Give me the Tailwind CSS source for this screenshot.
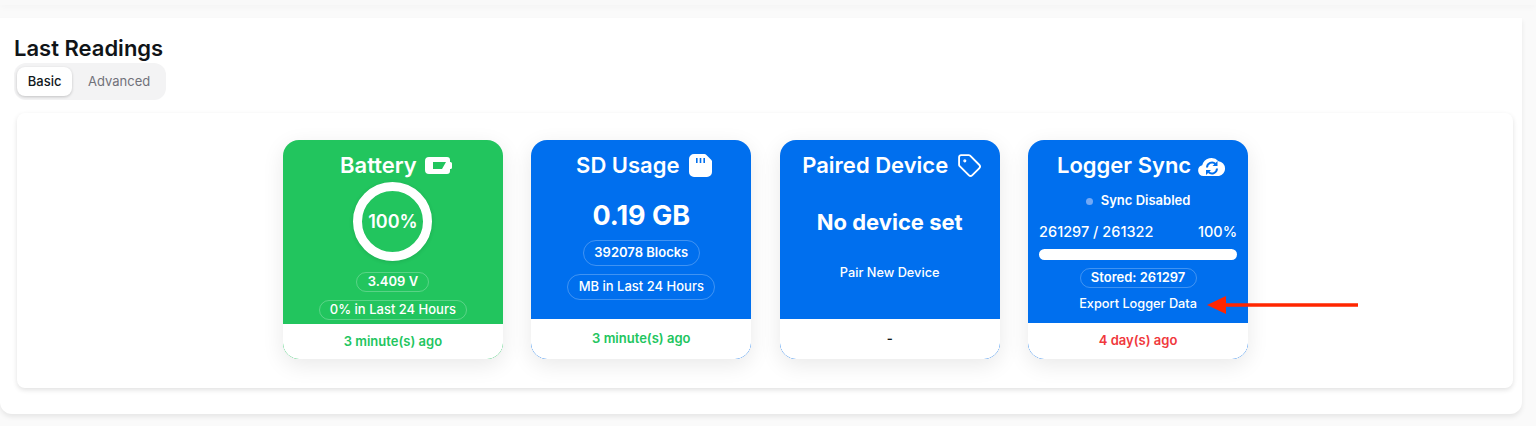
<!DOCTYPE html>
<html><head><meta charset="utf-8"><script src="https://cdn.jsdelivr.net/npm/@tailwindcss/browser@4"></script></head>
<body class="bg-[#fafafa] h-[426px] overflow-hidden relative font-['Inter',sans-serif]">
<div class="h-[5px] bg-[#f9f9f9] shadow-[0_2px_6px_rgba(0,0,0,0.03)]"></div>
<div class="mt-[13px] mr-[14px] h-[396px] bg-white rounded-br-xl rounded-bl-xl shadow-[0_3px_5px_rgba(0,0,0,0.08)] pl-[14px] pt-[16px]">
  <h2 class="text-[22px] leading-[29px] font-semibold text-[#101418]">Last Readings</h2>
  <div class="flex items-center w-[152px] h-[37px] bg-[#f3f3f4] rounded-xl px-[3px] gap-[3px] text-[13px]">
    <button class="w-[56px] h-[29px] bg-white rounded-lg text-[#11181c] font-medium shadow-[0_1px_3px_rgba(0,0,0,0.2)]">Basic</button>
    <button class="w-[89px] h-[29px] text-[#71717a]">Advanced</button>
  </div>
  <div class="mt-[13px] ml-[3px] mr-[9px] h-[275px] bg-white rounded-lg shadow-[0_2px_5px_rgba(0,0,0,0.12)] pt-[27px] flex justify-center gap-[28.4px] pl-[1px]">

    <div class="w-[220px] h-[219px] rounded-2xl overflow-hidden bg-[#22c55e] flex flex-col shadow-[0_6px_22px_rgba(0,0,0,0.09)]">
      <div class="h-[184px] text-white flex flex-col items-center">
        <div class="h-[42px] flex items-center gap-[8px] pt-[8px] ml-[6px]">
          <span class="text-[22px] font-semibold">Battery</span>
          <svg class="w-[27px] h-[17px]" viewBox="0 0 27 17"><path fill="#fff" fill-rule="evenodd" d="M4 0h18a3 3 0 0 1 3 3v2h.5a1.5 1.5 0 0 1 1.5 1.5v4a1.5 1.5 0 0 1-1.5 1.5H25v2a3 3 0 0 1-3 3H4a4 4 0 0 1-4-4V4a4 4 0 0 1 4-4zM8 5v7h9l4-7z"/></svg>
        </div>
        <div class="w-[79px] h-[79px] rounded-full border-[9px] border-white flex items-center justify-center text-[18px] font-semibold shadow-[0_1px_4px_rgba(0,0,0,0.12)]">100%</div>
        <div class="mt-[11px] w-[73px] h-[20px] rounded-full border border-white/25 flex items-center justify-center text-[13px] font-semibold">3.409 V</div>
        <div class="mt-[8px] w-[148px] h-[20px] rounded-full border border-white/25 flex items-center justify-center text-[13px] font-medium">0% in Last 24 Hours</div>
      </div>
      <div class="flex-1 bg-white rounded-b-2xl flex items-center justify-center text-[13px] font-semibold text-[#22c55e]">3 minute(s) ago</div>
    </div>

    <div class="w-[220px] h-[219px] rounded-2xl overflow-hidden bg-[#006fee] flex flex-col shadow-[0_6px_22px_rgba(0,0,0,0.09)]">
      <div class="h-[179px] text-white flex flex-col items-center">
        <div class="h-[42px] flex items-center gap-[9px] pt-[8px] ml-[5px]">
          <span class="text-[22px] font-semibold">SD Usage</span>
          <svg class="w-[23px] h-[23px]" viewBox="0 0 23 23"><path fill="#fff" fill-rule="evenodd" d="M5 0h10.5a2 2 0 0 1 1.4.6l5.5 5.5a2 2 0 0 1 .6 1.4V18a5 5 0 0 1-5 5H5a5 5 0 0 1-5-5V5a5 5 0 0 1 5-5zM7 4v5h1.6V4zM10.7 4v5h1.6V4zM14.4 4v5h1.6V4z"/></svg>
        </div>
        <div class="mt-[17px] h-[34px] flex items-center text-[27px] font-bold">0.19 GB</div>
        <div class="mt-[7px] w-[117px] h-[26px] rounded-full border border-white/25 flex items-center justify-center text-[13px] font-semibold">392078 Blocks</div>
        <div class="mt-[8px] w-[148px] h-[26px] rounded-full border border-white/25 flex items-center justify-center text-[13px] font-medium">MB in Last 24 Hours</div>
      </div>
      <div class="flex-1 bg-white rounded-b-2xl flex items-center justify-center text-[13px] font-semibold text-[#22c55e]">3 minute(s) ago</div>
    </div>

    <div class="w-[220px] h-[219px] rounded-2xl overflow-hidden bg-[#006fee] flex flex-col shadow-[0_6px_22px_rgba(0,0,0,0.09)]">
      <div class="h-[179px] text-white flex flex-col items-center">
        <div class="h-[42px] flex items-center gap-[9px] pt-[8px] ml-[5px]">
          <span class="text-[22px] font-semibold">Paired Device</span>
          <svg class="w-[25px] h-[25px]" viewBox="0 0 24 24" fill="none" stroke="#fff" stroke-width="1.8" stroke-linecap="round" stroke-linejoin="round"><path d="M12.586 2.586A2 2 0 0 0 11.172 2H4a2 2 0 0 0-2 2v7.172a2 2 0 0 0 .586 1.414l8.704 8.704a2.426 2.426 0 0 0 3.42 0l6.58-6.58a2.426 2.426 0 0 0 0-3.42z"/><circle cx="7.5" cy="7.5" r=".6" fill="#fff"/></svg>
        </div>
        <div class="mt-[24px] h-[32px] flex items-center text-[22px] font-bold">No device set</div>
        <div class="mt-[25px] h-[20px] flex items-center text-[12.75px] font-medium">Pair New Device</div>
      </div>
      <div class="flex-1 bg-white rounded-b-2xl flex items-center justify-center text-[13px] font-semibold text-[#11181c]">-</div>
    </div>

    <div class="w-[220px] h-[219px] rounded-2xl overflow-hidden bg-[#006fee] flex flex-col shadow-[0_6px_22px_rgba(0,0,0,0.09)]">
      <div class="h-[183px] text-white flex flex-col items-center px-[11px]">
        <div class="h-[42px] flex items-center gap-[7px] pt-[8px] ml-[7px]">
          <span class="text-[22px] font-semibold">Logger Sync</span>
          <svg class="w-[28px] h-[21px]" viewBox="0 0 28 21"><path fill="#fff" d="M5.5 21A5.5 5.5 0 0 1 4.2 10.2 9.5 9.5 0 0 1 20.5 6.2 7.5 7.5 0 0 1 21 21z"/><g fill="none" stroke="#006fee" stroke-width="2"><path d="M9 12.5a5 5 0 0 1 8.5-3.5"/><path d="M19 13.5a5 5 0 0 1-8.5 3.5"/></g><path fill="#006fee" d="M19.5 6v5h-5zM8 20v-5h5z"/></svg>
        </div>
        <div class="mt-[10px] h-[18px] flex items-center gap-[8px] text-[13px] font-semibold"><span class="w-[7px] h-[7px] rounded-full bg-[#73a9f5]"></span>Sync Disabled</div>
        <div class="mt-[11px] w-full h-[22px] flex items-center justify-between text-[14.5px] font-medium"><span>261297 / 261322</span><span>100%</span></div>
        <div class="mt-[6px] w-full h-[11px] rounded-full bg-white"></div>
        <div class="mt-[8px] w-[117px] h-[20px] rounded-full border border-white/25 flex items-center justify-center text-[13px] font-semibold">Stored: 261297</div>
        <div class="mt-[6px] h-[20px] flex items-center text-[12.75px] font-medium">Export Logger Data</div>
      </div>
      <div class="flex-1 bg-white rounded-b-2xl flex items-center justify-center text-[13px] font-semibold text-[#f0383c]">4 day(s) ago</div>
    </div>

  </div>
</div>
<svg class="absolute left-[1200px] top-[290px] w-[165px] h-[30px]" viewBox="0 0 165 30"><path fill="#ff2600" d="M7 15L26 6v7.3h132v3.4H26V24z"/></svg>
</body></html>
